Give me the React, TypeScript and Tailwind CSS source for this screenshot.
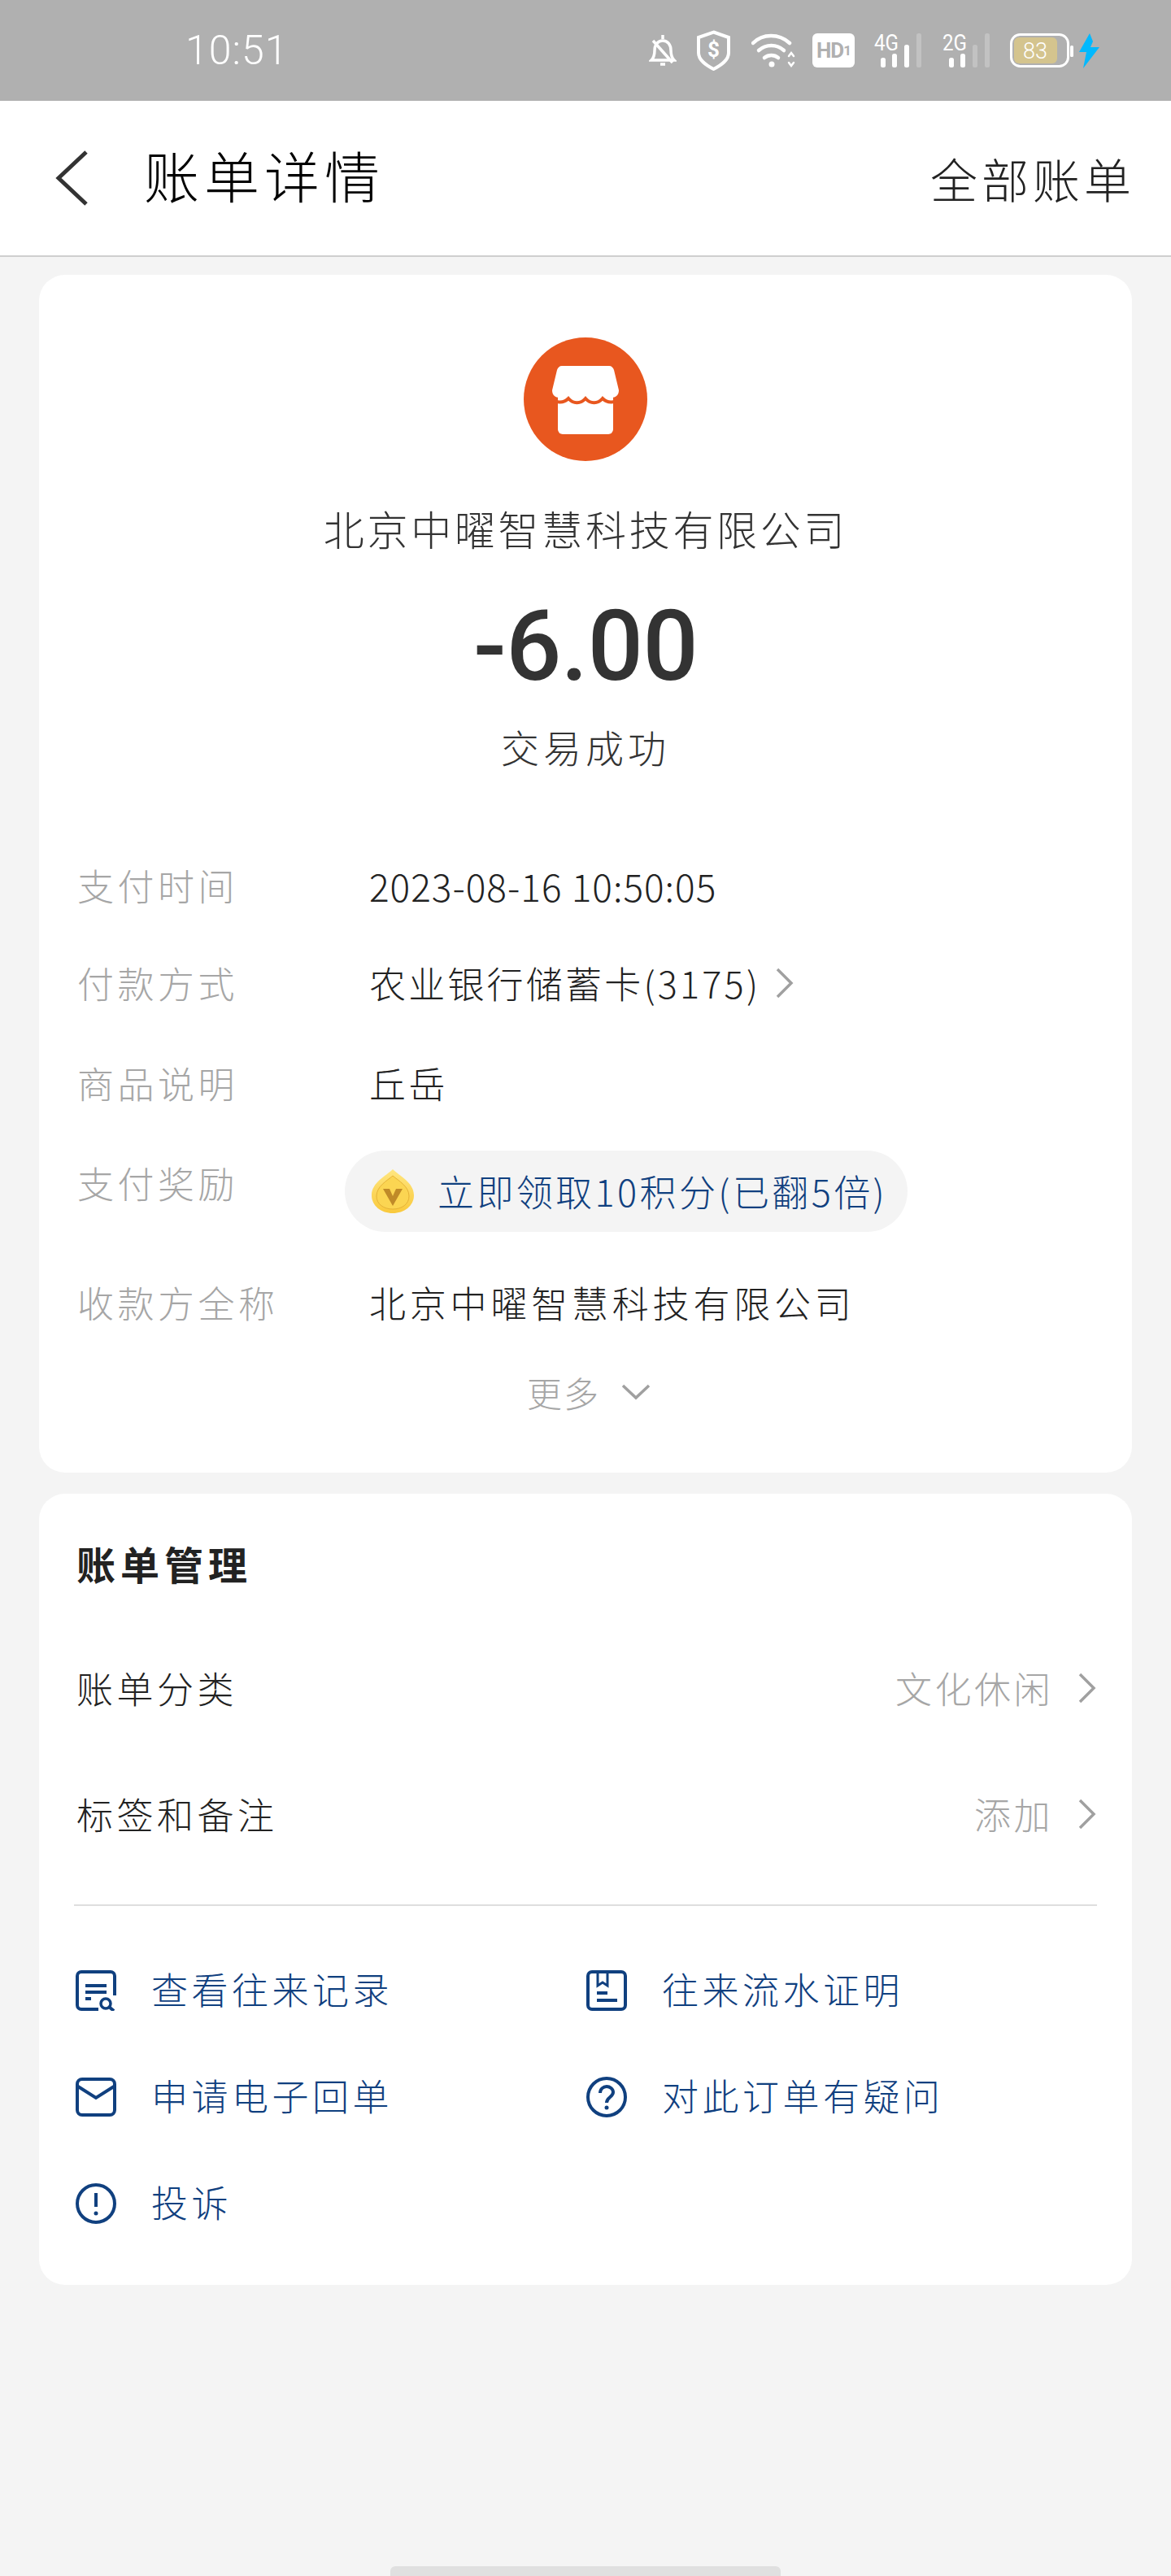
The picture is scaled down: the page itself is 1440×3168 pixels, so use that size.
import React from "react";

const blue = "#10407f";

const Signal = ({ label, full }: { label: string; full: number }) => {
  const bars = [
    { x: 8, h: 12 },
    { x: 22, h: 17 },
    { x: 37, h: 28 },
    { x: 52, h: 42 },
  ];
  return (
    <svg className="-mt-[12px]" width="59" height="54" viewBox="0 -12 59 54">
      <text x="0" y="21" fontSize="28" fill="#fff" textLength="30" lengthAdjust="spacingAndGlyphs" fontFamily="Roboto, sans-serif">
        {label}
      </text>
      {bars.map((b, i) => (
        <rect
          key={b.x}
          x={b.x}
          y={42 - b.h}
          width="6"
          height={b.h}
          rx="2.5"
          fill={i < full ? "#fff" : "#c2c2c2"}
        />
      ))}
    </svg>
  );
};

const StatusIcons = () => (
  <div className="ml-auto mr-[88px] flex items-center">
    <svg width="34" height="42" viewBox="0 0 34 42" fill="none" stroke="#fff" strokeWidth="3.5">
      <path d="M3 33c3-3 4-6 4-12 0-7 4-12 10-12s10 5 10 12c0 6 1 9 4 12z" />
      <path d="M5 9l24 27" />
      <path d="M14 38h6" />
      <path d="M17 2v5" />
    </svg>
    <svg className="ml-[24px]" width="43" height="50" viewBox="0 0 43 50" fill="none">
      <path d="M21.5 2.5L40 9v19c0 9-9 15-18.5 20C12 43 3 37 3 28V9z" stroke="#fff" strokeWidth="4" />
      <text x="21.5" y="33" fontSize="26" fontWeight="700" textAnchor="middle" fill="#fff" fontFamily="Roboto, sans-serif">
        $
      </text>
    </svg>
    <svg className="ml-[25px]" width="55" height="43" viewBox="0 0 55 43" fill="none" stroke="#fff" strokeWidth="4.5" strokeLinecap="round">
      <path d="M2 12c12-12 32-12 45 0" />
      <path d="M9 21c9-8 22-8 31 0" />
      <path d="M16 30c5-4 12-4 17 0" />
      <circle cx="25" cy="38" r="3.5" fill="#fff" stroke="none" />
      <path d="M46 28l3-4 3 4M46 36l3 4 3-4" strokeWidth="2.5" />
    </svg>
    <div className="ml-[20px] flex h-[42px] w-[52px] items-center justify-center rounded-[6px] bg-white font-['Roboto',sans-serif] text-[26px] leading-[42px] font-bold tracking-[-1px] text-[#b0b0b0]">
      HD<span className="text-[17px]">1</span>
    </div>
    <div className="ml-[24px]">
      <Signal label="4G" full={3} />
    </div>
    <div className="ml-[25px]">
      <Signal label="2G" full={2} />
    </div>
    <svg className="ml-[24px]" width="78" height="42" viewBox="0 0 78 42" fill="none">
      <rect x="1.5" y="1.5" width="70" height="39" rx="11" stroke="#fff" strokeWidth="3" />
      <rect x="5" y="5" width="53" height="32" rx="6" fill="#d4c48e" />
      <rect x="74" y="15" width="4" height="14" rx="1.5" fill="#fff" />
      <text x="31" y="31" fontSize="27" textAnchor="middle" fill="#fff" fontWeight="300" fontFamily="Roboto, sans-serif">
        83
      </text>
    </svg>
    <svg className="ml-[7px]" width="25" height="43" viewBox="0 0 25 43">
      <path d="M13 0L0 23h9L5 43 25 17h-11l3-7z" fill="#00b9ff" />
    </svg>
  </div>
);

const ChevronRight = ({ className }: { className?: string }) => (
  <svg className={className} width="24" height="38" viewBox="0 0 24 38" fill="none" stroke="#a0a0a0" strokeWidth="3.5">
    <path d="M3 2l17 17L3 36" />
  </svg>
);

const DetailRow = ({ label, className, children }: { label: string; className: string; children: React.ReactNode }) => (
  <div className={`flex h-[60px] items-center ${className}`}>
    <span className="w-[359px] shrink-0 text-[45px] leading-[60px] font-light tracking-[4.5px] text-[#a6a6a6]">{label}</span>
    {children}
  </div>
);

const ActionItem = ({ icon, text }: { icon: React.ReactNode; text: string }) => (
  <div className="flex h-[50px] items-center gap-[43px]">
    {icon}
    <span className="mb-[4px] text-[45px] leading-[50px] font-light tracking-[4.5px] text-[#10407f]">{text}</span>
  </div>
);

const ManageRow = ({ label, value, className }: { label: string; value: string; className: string }) => (
  <div className={`flex h-[60px] items-center justify-between pl-[3px] ${className}`}>
    <span className="text-[45px] leading-[60px] font-light tracking-[4.5px] text-[#222]">{label}</span>
    <div className="flex items-center gap-[30px]">
      <span className="text-[45px] leading-[60px] font-light tracking-[3.5px] text-[#a6a6a6]">{value}</span>
      <ChevronRight />
    </div>
  </div>
);

const App = () => {
  return (
    <div className="flex min-h-[3168px] flex-col bg-[#f4f4f4] font-['Noto_Sans_CJK_SC','Liberation_Sans',sans-serif]">
      <div className="flex h-[124px] shrink-0 items-center bg-[#b0b0b0] pl-[228px]">
        <span className="font-['Roboto',sans-serif] text-[50px] font-light tracking-[1px] text-white">10:51</span>
        <StatusIcons />
      </div>

      <div className="flex h-[192px] shrink-0 items-center border-b-2 border-[#cfcfcf] bg-white pl-[68px] pr-[44px]">
        <svg width="40" height="68" viewBox="0 0 40 68" fill="none" stroke="#333" strokeWidth="5">
          <path d="M38 2L4 34l34 32" />
        </svg>
        <span className="mb-[8px] ml-[69px] text-[68px] font-light tracking-[6px] text-black">账单详情</span>
        <span className="ml-auto text-[58px] font-light tracking-[5px] text-[#222]">全部账单</span>
      </div>

      <div className="mx-[48px] mt-[22px] flex flex-col rounded-[32px] bg-white px-[47px] pb-[69px] pt-[77px]">
        <div className="flex h-[152px] w-[152px] items-center justify-center self-center rounded-full bg-[#e8571f]">
          <svg width="152" height="152" viewBox="0 0 152 152">
            <rect x="42" y="64" width="68" height="55" rx="6" fill="#fff" />
            <path
              d="M47 35h58c3 0 5 2 6 5l6 25c0 6-4 9-9 9-5 0-8-3-10-6-2 3-6 6-11 6s-9-3-11-6c-2 3-6 6-11 6s-9-3-11-6c-2 3-5 6-10 6-5 0-9-3-9-9l6-25c1-3 3-5 6-5z"
              fill="#fff"
            />
            <path
              d="M35 70c4 5 13 7 20 0 6 7 15 7 21 0 6 7 15 7 21 0 7 7 16 5 20 0"
              fill="none"
              stroke="#e8571f"
              strokeWidth="4"
              transform="translate(0 5)"
            />
          </svg>
        </div>
        <div className="mt-[47px] h-[70px] text-center text-[50px] leading-[70px] font-light tracking-[3.7px] text-[#333]">
          北京中曜智慧科技有限公司
        </div>
        <div className="mt-[41px] h-[140px] text-center font-['Roboto',sans-serif] text-[120px] leading-[140px] font-medium tracking-[-0.5px] text-[#333]">
          -6.00
        </div>
        <div className="mt-[23px] h-[60px] text-center text-[47px] leading-[60px] font-light tracking-[5px] text-[#333]">
          交易成功
        </div>

        <DetailRow label="支付时间" className="mt-[111px]">
          <span className="text-[46px] leading-[60px] font-light tracking-[1px] text-[#222]">2023-08-16 10:50:05</span>
        </DetailRow>
        <DetailRow label="付款方式" className="mt-[60px]">
          <span className="text-[45px] leading-[60px] font-light tracking-[3.2px] text-[#222]">农业银行储蓄卡(3175)</span>
          <ChevronRight className="ml-[18px]" />
        </DetailRow>
        <DetailRow label="商品说明" className="mt-[63px]">
          <span className="text-[45px] leading-[60px] font-light tracking-[3.5px] text-[#222]">丘岳</span>
        </DetailRow>

        <div className="mt-[53px] flex h-[100px] items-start">
          <span className="mt-[10px] w-[329px] shrink-0 text-[45px] leading-[60px] font-light tracking-[4.5px] text-[#a6a6a6]">
            支付奖励
          </span>
          <div className="flex h-[100px] w-[692px] items-center rounded-full bg-[#f4f4f4] pl-[33px]">
            <svg width="52" height="54" viewBox="0 0 52 54">
              <defs>
                <linearGradient id="coin" x1="0" y1="0" x2="0" y2="1">
                  <stop offset="0" stopColor="#ffe680" />
                  <stop offset="1" stopColor="#f9c93c" />
                </linearGradient>
              </defs>
              <path d="M26 0c8 8 26 16 26 32 0 13-12 22-26 22S0 45 0 32C0 16 18 8 26 0z" fill="url(#coin)" />
              <path d="M26 8c7 6 20 13 20 25 0 10-9 16-20 16S6 43 6 33C6 21 19 14 26 8z" fill="#fbd552" stroke="#e5b237" strokeWidth="1" />
              <path d="M14 24h8l4 9 4-9h8l-12 21z" fill="#c08a28" />
            </svg>
            <span className="ml-[29px] text-[45px] leading-[60px] font-light tracking-[3.4px] text-[#10407f]">
              立即领取10积分(已翻5倍)
            </span>
          </div>
        </div>

        <DetailRow label="收款方全称" className="mt-[57px]">
          <span className="text-[45px] leading-[60px] font-light tracking-[4.8px] text-[#222]">北京中曜智慧科技有限公司</span>
        </DetailRow>

        <div className="mt-[50px] flex h-[60px] items-center justify-center gap-[26px] pl-[8px]">
          <span className="text-[43px] leading-[60px] font-light tracking-[2px] text-[#a6a6a6]">更多</span>
          <svg width="36" height="20" viewBox="0 0 36 20" fill="none" stroke="#a0a0a0" strokeWidth="3.5">
            <path d="M2 2l16 15L34 2" />
          </svg>
        </div>
      </div>

      <div className="mx-[48px] mt-[26px] flex flex-col rounded-[32px] bg-white px-[43px] pb-[75px] pt-[55px]">
        <div className="h-[60px] pl-[3px] text-[48px] leading-[60px] font-bold tracking-[6px] text-[#222]">账单管理</div>
        <ManageRow label="账单分类" value="文化休闲" className="mt-[94px]" />
        <ManageRow label="标签和备注" value="添加" className="mt-[95px]" />
        <div className="mt-[81px] h-[2px] bg-[#dedede]" />

        <div className="mt-[79px] grid grid-cols-[628px_1fr] gap-y-[81px] pl-[2px]">
          <ActionItem
            text="查看往来记录"
            icon={
              <svg width="50" height="50" viewBox="0 0 50 50" fill="none" stroke={blue} strokeWidth="4">
                <path d="M28 48H7a5 5 0 0 1-5-5V7a5 5 0 0 1 5-5h36a5 5 0 0 1 5 5v24" />
                <path d="M12 19h26M12 27h26M12 35h7" />
                <circle cx="37" cy="41" r="6" strokeWidth="3.5" />
                <path d="M41 45l6 5" />
              </svg>
            }
          />
          <ActionItem
            text="往来流水证明"
            icon={
              <svg width="50" height="50" viewBox="0 0 50 50" fill="none" stroke={blue} strokeWidth="4">
                <rect x="2" y="2" width="46" height="46" rx="5" />
                <path d="M14 2v17l6-4 6 4V2" strokeWidth="3" />
                <path d="M13 28h13M13 37h25" />
              </svg>
            }
          />
          <ActionItem
            text="申请电子回单"
            icon={
              <svg width="50" height="50" viewBox="0 0 50 50" fill="none" stroke={blue} strokeWidth="4">
                <rect x="2" y="3" width="46" height="44" rx="6" />
                <path d="M3 12l22 14 22-14" />
              </svg>
            }
          />
          <ActionItem
            text="对此订单有疑问"
            icon={
              <svg width="50" height="50" viewBox="0 0 50 50" fill="none" stroke={blue} strokeWidth="4">
                <circle cx="25" cy="25" r="23" />
                <path d="M17 20c0-5 4-8 8-8s8 3 8 7c0 6-8 6-8 13" />
                <circle cx="25" cy="38" r="2.5" fill={blue} stroke="none" />
              </svg>
            }
          />
          <ActionItem
            text="投诉"
            icon={
              <svg width="50" height="50" viewBox="0 0 50 50" fill="none" stroke={blue} strokeWidth="4">
                <circle cx="25" cy="25" r="23" />
                <path d="M25 12v17" />
                <circle cx="25" cy="37" r="2.5" fill={blue} stroke="none" />
              </svg>
            }
          />
        </div>
      </div>

      <div className="mx-auto mt-auto h-[12px] w-[480px] rounded-t-[6px] bg-[#e0e0e0]" />
    </div>
  );
};

export default App;
